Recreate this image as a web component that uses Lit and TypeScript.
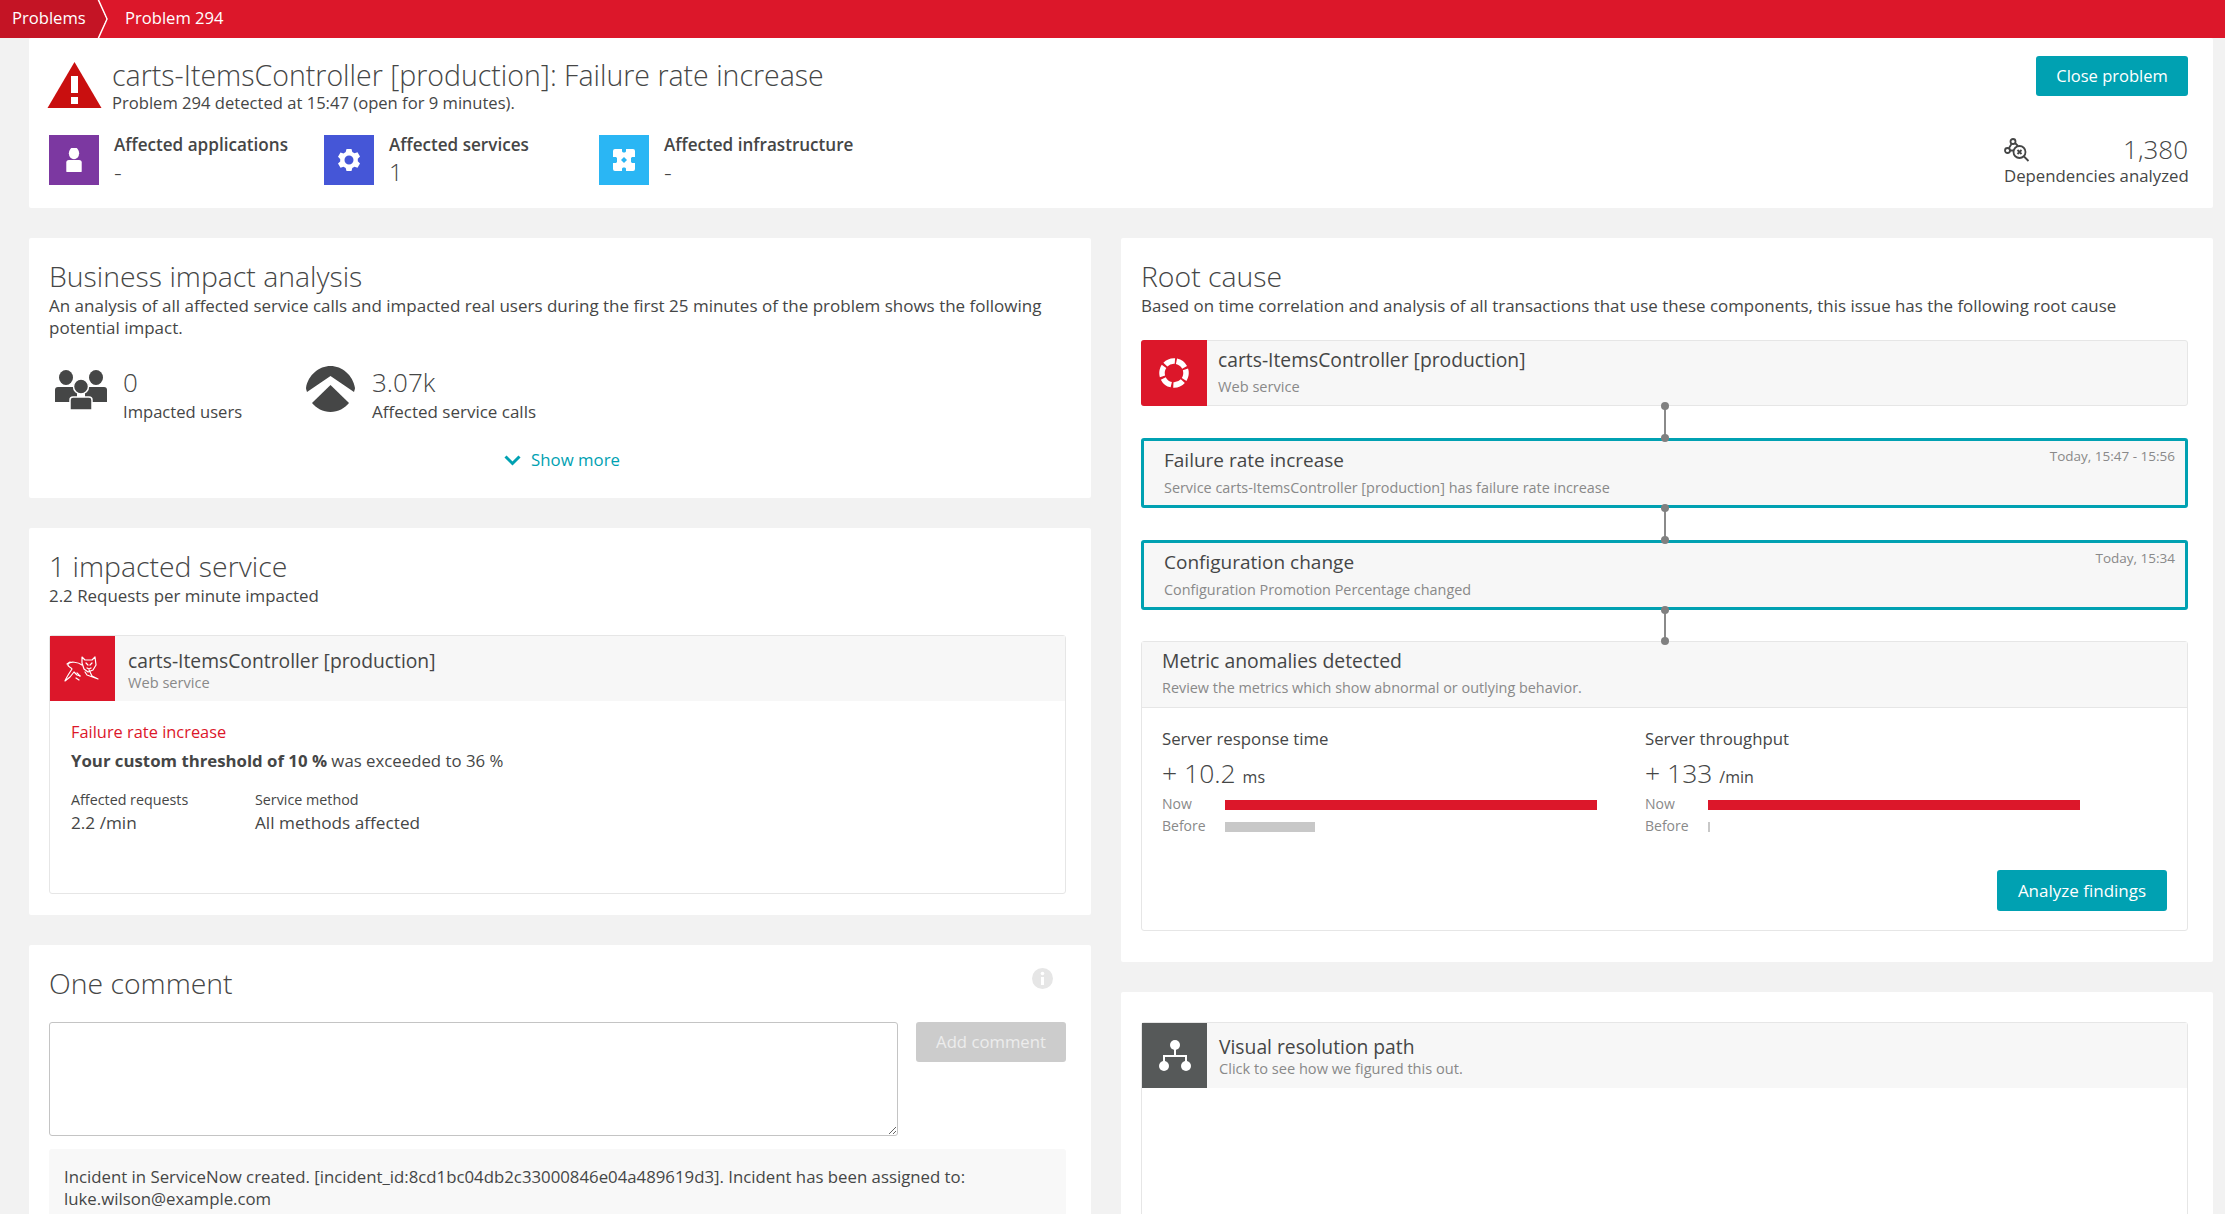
import { LitElement, html, css, svg } from "lit";
import { customElement } from "lit/decorators.js";

const person = (x: number, y: number, s: number) => svg`
  <g transform="translate(${x} ${y}) scale(${s})">
    <ellipse cx="9" cy="6" rx="6" ry="7"/>
    <path d="M0 17q0-3 3-3h12q3 0 3 3v10q0 1-1 1H1q-1 0-1-1z"/>
  </g>`;

const tomcat = html`<svg width="40" height="30" viewBox="0 0 40 30" fill="none" stroke="#fff" stroke-width="1.2" stroke-linecap="round" stroke-linejoin="round">
  <path d="M19 3l3 3h7l3-3 1 8-3 5-5 2-4-3-2-6z"/>
  <path d="M23 9l2 2m4-2l-2 2m-3 3l2 1 2-1"/>
  <path d="M19 11c-4-3-12-4-14-1-1 3 3 3 4 5-2 3-6 9-7 12l5-4 4-5 3 3 3 1m5-4l2 3 11 4-6-3-3-6"/>
  <path d="M4 10l3-2m7 11l3 3m-4 2l3 2"/>
</svg>`;

const ring = html`<svg width="30" height="30" viewBox="0 0 30 30" fill="none" stroke="#fff" stroke-width="5.500">
  <circle cx="15" cy="15" r="12" stroke-dasharray="10.400 2.170" transform="rotate(-78 15 15)"/>
</svg>`;

@customElement("app-root")
export class AppRoot extends LitElement {
  static styles = css`
    :host { display: block; height: 1214px; overflow: hidden; background: #f2f2f2; font-family: "Open Sans", "Noto Sans", sans-serif; color: #454646; font-size: 16.9px; line-height: 22px; }
    * { box-sizing: border-box; }
    .bar { height: 38px; background: #dc172a; color: #fff; display: flex; align-items: center; font-size: 16.6px; }
    .crumb { height: 38px; padding-bottom: 3px; display: flex; align-items: center; flex: none; }
    .crumb.first { width: 106px; padding-left: 12px; background: #c41425; clip-path: polygon(0 0, 97px 0, 106px 19px, 97px 38px, 0 38px); }
    .chev { width: 12px; height: 38px; flex: none; margin-left: -9px; margin-right: 16px; }
    .wrap { padding: 0 12px 0 29px; }
    .card { background: #fff; border-radius: 2px; }
    .top { height: 170px; padding: 18px 25px 0 18px; display: flex; justify-content: space-between; }
    .top-l { display: flex; flex-direction: column; }
    .head { display: flex; gap: 10px; align-items: flex-start; height: 79px; }
    .head svg { margin-top: 5px; flex: none; }
    h1 { margin: 0; font-size: 28.5px; font-weight: 300; line-height: 38px; white-space: nowrap; }
    .sub { font-size: 16.6px; line-height: 20px; margin-top: -1px; }
    .tiles { display: flex; margin-left: 2px; }
    .tile { width: 275px; display: flex; gap: 15px; }
    .sq { width: 50px; height: 50px; display: flex; align-items: center; justify-content: center; flex: none; }
    .tile b { display: block; font-weight: 600; font-size: 17.1px; line-height: 22px; margin-top: -1px; }
    .tile span { display: block; font-size: 24px; font-weight: 300; line-height: 28px; margin-top: 2px; }
    .top-r { display: flex; flex-direction: column; align-items: flex-end; }
    button { font: inherit; border: 0; border-radius: 3px; background: #00a1b2; color: #fff; height: 40px; padding: 0; font-size: 16.5px; }
    .close { width: 152px; }
    .deps { margin-top: 38px; width: 184px; }
    .deps-n { display: flex; justify-content: space-between; align-items: center; font-size: 26px; font-weight: 300; line-height: 31px; }
    .deps-l { font-size: 16.8px; line-height: 22px; white-space: nowrap; text-align: right; }
    .cols { display: grid; grid-template-columns: 1062px 1092px; column-gap: 30px; margin-top: 30px; align-items: start; }
    .col { display: flex; flex-direction: column; gap: 30px; }
    .pad { padding: 19px 25px 0 20px; }
    h2 { margin: 0; font-size: 28.4px; font-weight: 300; line-height: 38px; }
    p { margin: 0; line-height: 22px; }
    .p1 { height: 260px; }
    .p1 p { font-size: 17px; }
    .kpis { display: flex; margin-top: 27px; height: 60px; }
    .kpi { display: flex; gap: 16px; margin-left: 6px; width: 251px; }
    .kpi.second { gap: 17px; margin-left: 0; }
    .kpi svg.users { margin-top: 2px; }
    .kpi div.n { font-size: 26px; font-weight: 300; line-height: 32px; }
    .kpi div.l { font-size: 16.6px; line-height: 22px; margin-top: 3px; }
    .kpi.second div.l { font-size: 17px; }
    .more { display: flex; align-items: center; justify-content: center; gap: 10px; color: #00a1b2; font-size: 16.8px; margin-top: 23px; width: 1028px; height: 22px; margin-left: -1px; }
    .p2 { height: 387px; }
    .box { border: 1px solid #e6e6e6; border-radius: 3px; background: #fff; }
    .svc { height: 65px; display: flex; background: #f7f7f7; }
    .ico { width: 65px; flex: none; background: #dc172a; display: flex; align-items: center; justify-content: center; }
    .svc-t { padding-left: 13px; }
    .svc-n { font-size: 19.3px; line-height: 25px; white-space: nowrap; }
    .svc-s { font-size: 14.6px; line-height: 18px; color: #898989; }
    .impact { height: 259px; margin-top: 28px; width: 1017px; }
    .impact .svc-t { padding-top: 12px; }
    .det { padding: 20px 21px; }
    .red { color: #dc172a; font-size: 16.4px; line-height: 22px; }
    .thr { font-size: 16.8px; margin-top: 7px; }
    .thr b { font-weight: 700; }
    .facts { display: flex; margin-top: 17px; }
    .fact { width: 184px; }
    .fact small { display: block; font-size: 14.3px; line-height: 22px; }
    .fact span { display: block; font-size: 17.2px; line-height: 24px; }
    .p3 { height: 500px; position: relative; }
    .info { position: absolute; left: 1003px; top: 23px; width: 21px; height: 21px; }
    .form { display: flex; gap: 18px; margin-top: 20px; }
    textarea { width: 849px; height: 114px; border: 1px solid #c4c4c4; border-radius: 3px; background: #fff; display: block; margin: 0; padding: 0; outline: 0; font: inherit; }
    .add { width: 150px; background: #ccc; color: #ededed; flex: none; font-size: 16.7px; }
    .cmt { margin-top: 13px; width: 1017px; background: #f8f8f8; padding: 17px 15px; font-size: 16.8px; line-height: 22px; border-radius: 3px; }
    .r1 { height: 724px; padding: 19px 25px 0 20px; }
    .box1 { margin-top: 23px; }
    .path { height: 66px; display: flex; background: #f7f7f7; border: 1px solid #e6e6e6; border-radius: 3px; }
    .path .ico { margin: -1px 0 -1px -1px; width: 66px; border-radius: 3px 0 0 3px; }
    .path .svc-t { padding: 6px 0 0 11px; }
    .path .svc-s { margin-top: 5px; }
    .link { position: relative; height: 32px; }
    .link.short { height: 31px; }
    .link i { position: absolute; left: 523px; top: 0; bottom: 0; width: 2px; background: #8a8a8a; }
    .dot { position: absolute; left: 520px; width: 8px; height: 8px; border-radius: 50%; background: #808080; z-index: 1; }
    .dot.a { top: -4px; }
    .dot.b { bottom: -4px; }
    .evt { height: 70px; border: 3px solid #00a1b2; border-radius: 3px; background: #f7f7f7; padding: 5px 12px 0 20px; position: relative; }
    .evt-n { font-size: 19px; line-height: 28px; white-space: nowrap; }
    .evt-s { font-size: 14.4px; line-height: 18px; color: #898989; margin-top: 5px; }
    .evt time { position: absolute; top: 6px; right: 10px; font-size: 13.5px; line-height: 18px; color: #898989; }
    .anom { height: 290px; position: relative; }
    .anom-h { height: 66px; background: #f7f7f7; border-bottom: 1px solid #e6e6e6; padding: 5px 0 0 20px; }
    .anom-h .evt-s { margin-top: 4px; }
    .anom-h .evt-n { font-size: 19.4px; }
    .mets { display: flex; padding: 20px 0 0 20px; }
    .met { width: 483px; }
    .met-t { font-size: 16.8px; line-height: 22px; }
    .met-v { font-size: 26.5px; font-weight: 300; line-height: 30px; margin: 8px 0 1px; }
    .met-v small { font-size: 16px; font-weight: 400; }
    .row { display: flex; align-items: center; height: 22px; font-size: 14px; color: #898989; }
    .row em { width: 63px; flex: none; font-style: normal; }
    .row i { display: block; height: 10px; margin-top: 2px; }
    .now { background: #dc172a; width: 372px; }
    .was { background: #c8c8c8; width: 90px; }
    .was.thin { width: 2px; }
    .analyze { position: absolute; right: 20px; bottom: 19px; width: 170px; height: 41px; font-size: 17px; }
    .p4 { padding: 30px 25px 0 20px; height: 400px; }
    .vis { height: 300px; width: 1047px; }
    .vis .ico { background: #565959; }
    .vis .svc-t { padding: 11px 0 0 12px; }
    .sq.app { background: #7c38a1; }
    .sq.srv { background: #4556d7; }
    .sq.inf { background: #2ab6f4; }
  `;

  render() {
    return html`
      <div class="bar">
        <div class="crumb first">Problems</div>
        <svg class="chev" viewBox="0 0 12 38" fill="none" stroke="#fff" stroke-width="1.500"><path d="M1 -1l9 20-9 20"/></svg>
        <div class="crumb">Problem 294</div>
      </div>
      <div class="wrap">
        <div class="card top">
          <div class="top-l">
            <div class="head">
              <svg width="55" height="48" viewBox="0 0 55 48"><path d="M27.500 1L54.500 47H.5z" fill="#c90f0f"/><rect x="24" y="15" width="7" height="17" fill="#fff"/><rect x="24" y="36" width="7" height="7" fill="#fff"/></svg>
              <div>
                <h1>carts-ItemsController [production]: Failure rate increase</h1>
                <div class="sub">Problem 294 detected at 15:47 (open for 9 minutes).</div>
              </div>
            </div>
            <div class="tiles">
              <div class="tile">
                <div class="sq app">
                  <svg width="18" height="24" viewBox="0 0 18 28" fill="#fff">${person(0, 0, 1)}</svg>
                </div>
                <div><b>Affected applications</b><span>-</span></div>
              </div>
              <div class="tile">
                <div class="sq srv">
                  <svg width="24" height="24" viewBox="0 0 24 24" fill="#fff"><path fill-rule="evenodd" d="M9.500 1h5l.8 3 2.200 1.200 3-.9 2.500 4.300-2.200 2.200v2.400l2.200 2.200-2.500 4.300-3-.9-2.200 1.200-.8 3h-5l-.8-3-2.200-1.200-3 .9L1 15.600l2.200-2.200V11L1 8.800l2.500-4.300 3 .9L8.700 4zM12 7.500a4.500 4.500 0 1 0 0 9 4.500 4.500 0 0 0 0-9z"/></svg>
                </div>
                <div><b>Affected services</b><span>1</span></div>
              </div>
              <div class="tile">
                <div class="sq inf">
                  <svg width="24" height="24" viewBox="0 0 24 24" fill="#fff"><path d="M1 3q0-2 2-2h7v2.500l1 1h2l1-1V1h7q2 0 2 2v6h-3l-1 1v4l1 1h3v6q0 2-2 2h-7v-2.500l-1-1h-2l-1 1V23H3q-2 0-2-2v-6h3l1-1v-4L4 9H1z"/><path d="M12 9l3 3-3 3-3-3z" fill="#2ab6f4"/></svg>
                </div>
                <div><b>Affected infrastructure</b><span>-</span></div>
              </div>
            </div>
          </div>
          <div class="top-r">
            <button class="close">Close problem</button>
            <div class="deps">
              <div class="deps-n">
                <svg width="26" height="24" viewBox="0 0 26 24" fill="none" stroke="#454646" stroke-width="1.800">
                  <circle cx="9" cy="3.500" r="2.500"/><circle cx="3.500" cy="12.500" r="2.500"/><path d="M7.500 6L5 10M6 12.500h4M11 5l3 3"/>
                  <circle cx="15.500" cy="14" r="6"/><path d="M20 18.500l4.500 4.500M13.500 12l4 4M17.500 12l-4 4"/>
                </svg>
                <span>1,380</span>
              </div>
              <div class="deps-l">Dependencies analyzed</div>
            </div>
          </div>
        </div>
        <div class="cols">
          <div class="col">
            <div class="card pad p1">
              <h2>Business impact analysis</h2>
              <p>An analysis of all affected service calls and impacted real users during the first 25 minutes of the problem shows the following potential impact.</p>
              <div class="kpis">
                <div class="kpi">
                  <svg class="users" width="52" height="42" viewBox="0 0 52 42" fill="#454646">
                    <g transform="translate(0 3)"><ellipse cx="11" cy="6.500" rx="7" ry="7.500"/><path d="M0 19q0-3 3-3h16q3 0 3 3v12H0z"/></g>
                    <g transform="translate(30 3)"><ellipse cx="11" cy="6.500" rx="7" ry="7.500"/><path d="M0 19q0-3 3-3h16q3 0 3 3v12H0z"/></g>
                    <g transform="translate(14 12)" stroke="#fff" stroke-width="1.500"><ellipse cx="12" cy="6.500" rx="7.500" ry="7.500"/><path d="M1 20q0-3 3-3h16q3 0 3 3v10H1z"/></g>
                  </svg>
                  <div><div class="n">0</div><div class="l">Impacted users</div></div>
                </div>
                <div class="kpi second">
                  <svg width="49" height="46" viewBox="0 0 49 46" fill="#454646">
                    <path d="M24.500 0C36 0 47 9 49 22c0 1-.5 2-1 4L24.500 10 1 26c-.5-2-1-3-1-4C2 9 13 0 24.500 0z"/>
                    <path d="M24.500 19L43 37c-4 5-11 9-18.500 9S10 42 6 37z"/>
                  </svg>
                  <div><div class="n">3.07k</div><div class="l">Affected service calls</div></div>
                </div>
              </div>
              <div class="more">
                <svg width="17" height="11" viewBox="0 0 17 11" fill="none" stroke="#00a1b2" stroke-width="3"><path d="M1.500 1.500l7 7 7-7"/></svg>
                <span>Show more</span>
              </div>
            </div>
            <div class="card pad p2">
              <h2>1 impacted service</h2>
              <p>2.2 Requests per minute impacted</p>
              <div class="box impact">
                <div class="svc">
                  <div class="ico">${tomcat}</div>
                  <div class="svc-t"><div class="svc-n">carts-ItemsController [production]</div><div class="svc-s">Web service</div></div>
                </div>
                <div class="det">
                  <div class="red">Failure rate increase</div>
                  <div class="thr"><b>Your custom threshold of 10 %</b> was exceeded to 36 %</div>
                  <div class="facts">
                    <div class="fact"><small>Affected requests</small><span>2.2 /min</span></div>
                    <div class="fact"><small>Service method</small><span>All methods affected</span></div>
                  </div>
                </div>
              </div>
            </div>
            <div class="card pad p3">
              <h2>One comment</h2>
              <svg class="info" viewBox="0 0 21 21"><circle cx="10.500" cy="10.500" r="10.500" fill="#e6e6e6"/><rect x="9" y="9" width="3" height="8" fill="#fff"/><circle cx="10.500" cy="5.500" r="1.800" fill="#fff"/></svg>
              <div class="form">
                <textarea aria-label="Comment"></textarea>
                <button class="add">Add comment</button>
              </div>
              <div class="cmt">Incident in ServiceNow created. [incident_id:8cd1bc04db2c33000846e04a489619d3]. Incident has been assigned to: luke.wilson@example.com</div>
            </div>
          </div>
          <div class="col">
            <div class="card r1">
              <h2>Root cause</h2>
              <p>Based on time correlation and analysis of all transactions that use these components, this issue has the following root cause</p>
              <div class="path box1">
                <div class="ico">${ring}</div>
                <div class="svc-t"><div class="svc-n">carts-ItemsController [production]</div><div class="svc-s">Web service</div></div>
              </div>
              <div class="link"><span class="dot a"></span><i></i><span class="dot b"></span></div>
              <div class="evt">
                <div class="evt-n">Failure rate increase</div>
                <div class="evt-s">Service carts-ItemsController [production] has failure rate increase</div>
                <time>Today, 15:47 - 15:56</time>
              </div>
              <div class="link"><span class="dot a"></span><i></i><span class="dot b"></span></div>
              <div class="evt">
                <div class="evt-n">Configuration change</div>
                <div class="evt-s">Configuration Promotion Percentage changed</div>
                <time>Today, 15:34</time>
              </div>
              <div class="link short"><span class="dot a"></span><i></i><span class="dot b"></span></div>
              <div class="box anom">
                <div class="anom-h">
                  <div class="evt-n">Metric anomalies detected</div>
                  <div class="evt-s">Review the metrics which show abnormal or outlying behavior.</div>
                </div>
                <div class="mets">
                  <div class="met">
                    <div class="met-t">Server response time</div>
                    <div class="met-v">+ 10.2 <small>ms</small></div>
                    <div class="row"><em>Now</em><i class="now"></i></div>
                    <div class="row"><em>Before</em><i class="was"></i></div>
                  </div>
                  <div class="met">
                    <div class="met-t">Server throughput</div>
                    <div class="met-v">+ 133 <small>/min</small></div>
                    <div class="row"><em>Now</em><i class="now"></i></div>
                    <div class="row"><em>Before</em><i class="was thin"></i></div>
                  </div>
                </div>
                <button class="analyze">Analyze findings</button>
              </div>
            </div>
            <div class="card p4">
              <div class="box vis">
                <div class="svc">
                  <div class="ico">
                    <svg width="32" height="32" viewBox="0 0 32 32" fill="#fff"><circle cx="16" cy="5" r="5"/><circle cx="5" cy="26" r="5"/><circle cx="27" cy="26" r="5"/><path d="M15 9h2v6h11v8h-2v-6H6v6H4v-8h11z"/></svg>
                  </div>
                  <div class="svc-t"><div class="svc-n">Visual resolution path</div><div class="svc-s">Click to see how we figured this out.</div></div>
                </div>
              </div>
            </div>
          </div>
        </div>
      </div>
    `;
  }
}
